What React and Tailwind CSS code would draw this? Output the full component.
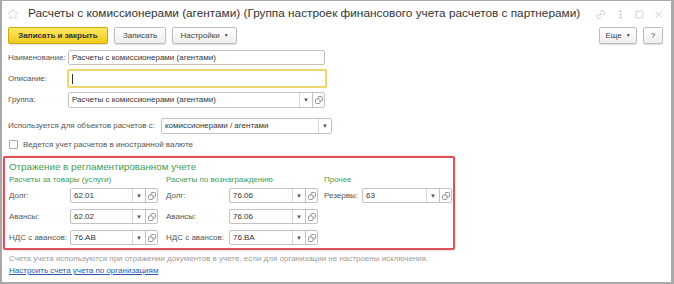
import React from "react";
import { Star, Link2, EllipsisVertical, Square, X } from "lucide-react";

const OpenIcon = () => (
  <svg width="8" height="8" viewBox="0 0 8 8" fill="none" stroke="#8a8a8a" strokeWidth="0.9">
    <rect x="0.5" y="3" width="4.5" height="4.5" rx="1" />
    <path d="M3 3V1.5a1 1 0 0 1 1-1h2.5a1 1 0 0 1 1 1V4a1 1 0 0 1-1 1H5" />
  </svg>
);

const Arrow = () => <span className="text-[6px] leading-none text-[#555]">▼</span>;

const Field = ({ value, w, h = "h-[15px]", drop, link }) => (
  <div className={`flex items-stretch border border-[#c2c2c2] rounded-[2px] bg-white ${w} ${h}`}>
    <span className="flex flex-1 items-center pl-[3px] text-[8px] text-[#333] whitespace-nowrap overflow-hidden">
      {value}
    </span>
    {drop && (
      <span className="flex w-[13px] items-center justify-center border-l border-[#d6d6d6]">
        <Arrow />
      </span>
    )}
    {link && (
      <span className="flex w-[12px] items-center justify-center border-l border-[#c2c2c2]">
        <OpenIcon />
      </span>
    )}
  </div>
);

const Btn = ({ children, w, primary }) => (
  <div
    className={`flex h-[17px] items-center justify-center rounded-[2px] border text-[8px] shadow-[0_1px_1px_rgba(0,0,0,0.12)] ${w} ${
      primary
        ? "border-[#c9a716] bg-gradient-to-b from-[#fde95c] to-[#f1cb12] font-bold text-[#333]"
        : "border-[#bdbdbd] bg-gradient-to-b from-white to-[#ededed] text-[#444]"
    }`}
  >
    {children}
  </div>
);

const Row = ({ label, lw, children, mt }) => (
  <div className={`flex items-center ${mt}`}>
    <span className={`text-[8px] text-[#555] whitespace-nowrap ${lw}`}>{label}</span>
    {children}
  </div>
);

export default function App() {
  return (
    <div className="w-[674px] h-[284px] overflow-hidden bg-white border-l-2 border-t border-r-[3px] border-b-2 border-[#a9a9a9] font-['Liberation_Sans',Arial,sans-serif]">
      {/* title */}
      <div className="flex h-[26px] items-center pl-[5px] pr-[7px]">
        <Star size={12} strokeWidth={1.3} className="text-[#c4c4c4]" />
        <span className="ml-[9px] text-[11.8px] text-[#333] whitespace-nowrap">
          Расчеты с комиссионерами (агентами) (Группа настроек финансового учета расчетов с партнерами)
        </span>
        <div className="ml-auto flex items-center gap-[9px] text-[#b0b0b0]">
          <Link2 size={11} strokeWidth={1.3} className="-rotate-45" />
          <EllipsisVertical size={11} strokeWidth={2} />
          <Square size={9} strokeWidth={1.5} />
          <X size={11} strokeWidth={1.4} />
        </div>
      </div>

      {/* toolbar */}
      <div className="flex items-center gap-[6px] pl-[6px] pr-[8px]">
        <Btn w="w-[100px]" primary>Записать и закрыть</Btn>
        <Btn w="w-[52px]">Записать</Btn>
        <Btn w="w-[65px]">
          Настройки <span className="ml-[4px] text-[5px]">▼</span>
        </Btn>
        <div className="ml-auto flex gap-[6px]">
          <Btn w="w-[38px]">
            Еще <span className="ml-[4px] text-[5px]">▼</span>
          </Btn>
          <Btn w="w-[20px]">?</Btn>
        </div>
      </div>

      <div className="pl-[6px]">
        <Row label="Наименование:" lw="w-[60px]" mt="mt-[6px]">
          <Field value="Расчеты с комиссионерами (агентами)" w="w-[257px]" />
        </Row>
        <Row label="Описание:" lw="w-[59px]" mt="mt-[4px]">
          <div className="flex h-[19px] w-[260px] items-center border-2 border-[#efd86a] rounded-[2px] pl-[3px]">
            <span className="h-[10px] w-px bg-[#333]" />
          </div>
        </Row>
        <Row label="Группа:" lw="w-[60px]" mt="mt-[4px]">
          <Field value="Расчеты с комиссионерами (агентами)" w="w-[257px]" h="h-[16px]" drop link />
        </Row>
        <Row label="Используется для объектов расчетов с:" lw="w-[153px]" mt="mt-[10px]">
          <Field value="комиссионерами / агентами" w="w-[171px]" h="h-[16px]" drop />
        </Row>
        <div className="mt-[5px] flex h-[11px] items-center">
          <span className="ml-[1px] h-[9px] w-[9px] rounded-[1px] border border-[#a9a9a9] bg-white" />
          <span className="ml-[5px] text-[8px] text-[#555]">Ведется учет расчетов в иностранной валюте</span>
        </div>
      </div>

      {/* highlighted group */}
      <div className="ml-[1px] mt-[6px] w-[452px] rounded-[2px] border-2 border-[#dc5258] pl-[4px] pb-[3px] shadow-[0_0_2px_rgba(220,70,70,0.45)]">
        <div className="mt-[2px] h-[13px] text-[9.8px] leading-[13px] text-[#3f9c57]">
          Отражение в регламентированном учете
        </div>
        <div className="flex mt-[2px]">
          <div className="w-[149px]">
            <div className="h-[10px] text-[8px] leading-[10px] text-[#3f9c57]">Расчеты за товары (услуги)</div>
            <Row label="Долг:" lw="w-[61px]" mt="mt-[3px]">
              <Field value="62.01" w="w-[88px]" drop link />
            </Row>
            <Row label="Авансы:" lw="w-[61px]" mt="mt-[6px]">
              <Field value="62.02" w="w-[88px]" drop link />
            </Row>
            <Row label="НДС с авансов:" lw="w-[61px]" mt="mt-[6px]">
              <Field value="76.АВ" w="w-[88px]" drop link />
            </Row>
          </div>
          <div className="ml-[8px] w-[152px]">
            <div className="h-[10px] text-[8px] leading-[10px] text-[#3f9c57]">Расчеты по вознаграждению</div>
            <Row label="Долг:" lw="w-[63px]" mt="mt-[3px]">
              <Field value="76.06" w="w-[89px]" drop link />
            </Row>
            <Row label="Авансы:" lw="w-[63px]" mt="mt-[6px]">
              <Field value="76.06" w="w-[89px]" drop link />
            </Row>
            <Row label="НДС с авансов:" lw="w-[63px]" mt="mt-[6px]">
              <Field value="76.ВА" w="w-[89px]" drop link />
            </Row>
          </div>
          <div className="ml-[6px] w-[128px]">
            <div className="h-[10px] text-[8px] leading-[10px] text-[#3f9c57]">Прочее</div>
            <Row label="Резервы:" lw="w-[38px]" mt="mt-[3px]">
              <Field value="63" w="w-[90px]" drop link />
            </Row>
          </div>
        </div>
      </div>

      <div className="pl-[7px]">
        <div className="mt-[4px] h-[10px] text-[8px] leading-[10px] text-[#9b9b9b]">
          Счета учета используются при отражении документов в учете, если для организации не настроены исключения.
        </div>
        <div className="mt-[2px] h-[10px] text-[8px] leading-[10px] text-[#2a5aa8] underline">
          Настроить счета учета по организациям
        </div>
      </div>
    </div>
  );
}
